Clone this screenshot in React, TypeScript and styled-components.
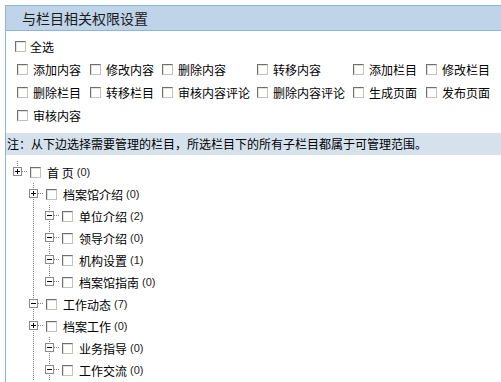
import * as React from 'react';
import styled, { createGlobalStyle } from 'styled-components';

const GlobalStyle = createGlobalStyle`
    html, body {
        margin: 0;
        padding: 0;
        background: #fff;
        overflow: hidden;
    }
    body {
        font-family: "Noto Sans CJK SC", "Liberation Sans", sans-serif;
        font-size: 12px;
        color: #000;
    }
`;

const Panel = styled.div`
    margin: 5px 0 0 5px;
    border-left: 1px solid #8fb4dc;
    min-height: 377px;
`;

const Header = styled.div`
    height: 24px;
    line-height: 24px;
    border-top: 1px solid #8fb4dc;
    border-bottom: 1px solid #8fb4dc;
    background: #bfd4e8;
    padding-left: 16px;
    font-size: 14px;
    color: #1a1a1a;
`;

const Options = styled.div`
    padding: 4px 0 6px 9px;
`;

const SelectAll = styled.label`
    display: flex;
    align-items: center;
    gap: 4px;
    height: 23px;
`;

const OptionGrid = styled.div`
    display: grid;
    grid-template-columns: 73px 72px 95px 96px 73px 73px;
    grid-auto-rows: 23px;
    margin-left: 2px;
`;

const Option = styled.label`
    display: flex;
    align-items: center;
    gap: 5px;
    white-space: nowrap;
`;

const Check = styled.input.attrs({ type: 'checkbox' })`
    appearance: none;
    -webkit-appearance: none;
    flex: none;
    margin: 0;
    width: 11px;
    height: 11px;
    box-sizing: border-box;
    border: 1px solid;
    border-color: #6e6e6e #c4c1bb #c4c1bb #6e6e6e;
    box-shadow: inset 1px 1px 0 #e4e2de;
    background: #fff;
`;

const Note = styled.div`
    height: 22px;
    line-height: 22px;
    background: #d5e2ee;
    padding-left: 1px;
    white-space: nowrap;
`;

const Tree = styled.div`
    padding: 6px 0 0 3px;
`;

const TreeRow = styled.div`
    display: flex;
    align-items: center;
    height: 22px;
    white-space: nowrap;
`;

const dotsDown = 'repeating-linear-gradient(to bottom, #808080 0 1px, transparent 1px 2px)';
const dotsRight = 'repeating-linear-gradient(to right, #808080 0 1px, transparent 1px 2px)';

const Guide = styled.span<{ $line: boolean }>`
    position: relative;
    align-self: stretch;
    width: 16px;
    flex: none;
    &::before {
        content: '';
        display: ${p => (p.$line ? 'block' : 'none')};
        position: absolute;
        left: 8px;
        top: 0;
        bottom: 0;
        width: 1px;
        background: ${dotsDown};
    }
`;

const Junction = styled.span<{ $up: boolean; $down: boolean }>`
    position: relative;
    align-self: stretch;
    width: 16px;
    flex: none;
    display: flex;
    align-items: flex-start;
    box-sizing: border-box;
    padding: 6px 0 0 4px;
    &::before {
        content: '';
        position: absolute;
        left: 8px;
        top: ${p => (p.$up ? '0' : '10px')};
        bottom: ${p => (p.$down ? '0' : '12px')};
        width: 1px;
        background: ${dotsDown};
    }
    &::after {
        content: '';
        position: absolute;
        left: 13px;
        right: -3px;
        top: 10px;
        height: 1px;
        background: ${dotsRight};
    }
    & > svg {
        position: relative;
        z-index: 1;
    }
`;

const NodeCheck = styled(Check)`
    margin-left: 5px;
`;

const NodeLabel = styled.span`
    margin-left: 6px;
`;

const Count = styled.span`
    margin-left: 3px;
    font-family: "Liberation Sans", Arial, sans-serif;
    font-size: 11px;
    color: #222;
`;

const ToggleBox: React.FC<{ open: boolean }> = ({ open }) => (
    <svg width="9" height="9" viewBox="0 0 9 9" shapeRendering="crispEdges">
        <rect x="0.5" y="0.5" width="8" height="8" fill="#fff" stroke="#8a8a8a" />
        <path d="M2 4.5h5" stroke="#000" />
        {!open && <path d="M4.5 2v5" stroke="#000" />}
    </svg>
);

const optionRows = [
    ['添加内容', '修改内容', '删除内容', '转移内容', '添加栏目', '修改栏目'],
    ['删除栏目', '转移栏目', '审核内容评论', '删除内容评论', '生成页面', '发布页面'],
    ['审核内容'],
];

type Node = {
    name: string;
    count: number;
    guides: boolean[];
    open: boolean;
    up: boolean;
    down: boolean;
};

const nodes: Node[] = [
    { name: '首 页', count: 0, guides: [], open: false, up: true, down: false },
    { name: '档案馆介绍', count: 0, guides: [false], open: false, up: true, down: true },
    { name: '单位介绍', count: 2, guides: [false, true], open: true, up: true, down: true },
    { name: '领导介绍', count: 0, guides: [false, true], open: true, up: true, down: true },
    { name: '机构设置', count: 1, guides: [false, true], open: true, up: true, down: true },
    { name: '档案馆指南', count: 0, guides: [false, true], open: true, up: true, down: false },
    { name: '工作动态', count: 7, guides: [false], open: true, up: true, down: true },
    { name: '档案工作', count: 0, guides: [false], open: false, up: true, down: true },
    { name: '业务指导', count: 0, guides: [false, true], open: true, up: true, down: true },
    { name: '工作交流', count: 0, guides: [false, true], open: true, up: true, down: true },
];

const App: React.FC = () => {
    return <>
        <GlobalStyle />
        <Panel>
            <Header>与栏目相关权限设置</Header>
            <Options>
                <SelectAll><Check />全选</SelectAll>
                <OptionGrid>
                    {optionRows.flat().map(label =>
                        <Option key={label}><Check />{label}</Option>
                    )}
                </OptionGrid>
            </Options>
            <Note>注：从下边选择需要管理的栏目，所选栏目下的所有子栏目都属于可管理范围。</Note>
            <Tree>
                {nodes.map(n =>
                    <TreeRow key={n.name}>
                        {n.guides.map((g, i) => <Guide key={i} $line={g} />)}
                        <Junction $up={n.up} $down={n.down}>
                            <ToggleBox open={n.open} />
                        </Junction>
                        <NodeCheck />
                        <NodeLabel>{n.name}</NodeLabel>
                        <Count>({n.count})</Count>
                    </TreeRow>
                )}
            </Tree>
        </Panel>
    </>
}

export default App;
